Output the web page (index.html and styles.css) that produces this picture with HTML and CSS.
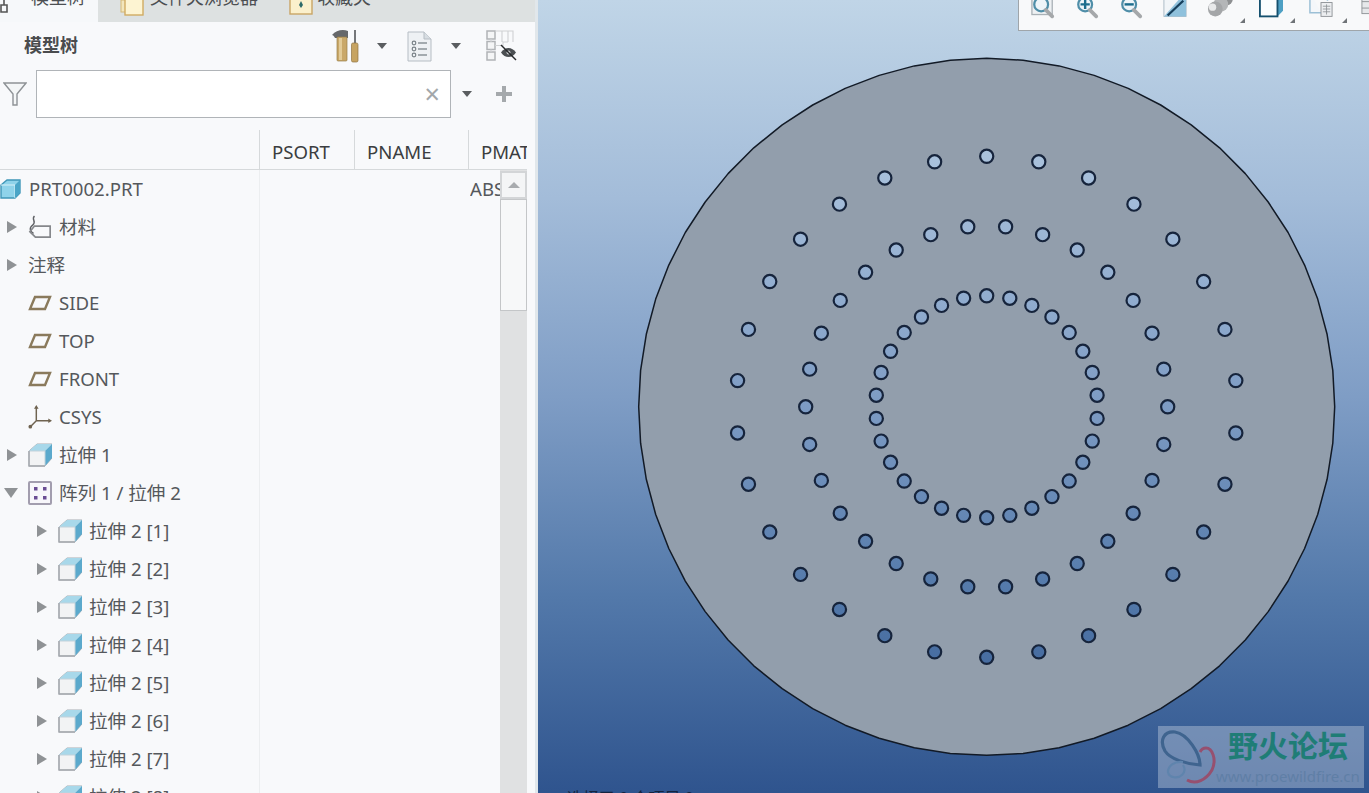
FILE: index.html
```html
<!DOCTYPE html>
<html lang="zh">
<head>
<meta charset="utf-8">
<title>模型树</title>
<link rel="stylesheet" href="styles.css">
</head>
<body>
<svg class="defs" width="0" height="0" aria-hidden="true">
  <defs>
    <symbol id="i-solid" viewBox="0 0 21 20">
      <path d="M1 6 L7 1 H20 V14 L15 19 H1Z" fill="#8fd3ea" stroke="#3f97b8" stroke-width="1.4"/>
      <path d="M1 6 H15 V19" fill="none" stroke="#d8f1f8" stroke-width="1"/>
      <path d="M15 6 L20 1 V14 L15 19Z" fill="#4aa5c7"/>
    </symbol>
    <symbol id="i-cube" viewBox="0 0 24 24">
      <path d="M1 8 L9 1 H24 V15 L17 23 H1Z" fill="#f2f3f4" stroke="#a9adb2" stroke-width="1"/>
      <path d="M1 8 L9 1 H24 L17 8Z" fill="#a8d8ea"/>
      <path d="M17 8 L24 1 V15 L17 23Z" fill="#5ba9cc"/>
      <path d="M1 8 H17 V23" fill="none" stroke="#c2d2da" stroke-width="1"/>
      <path d="M1 8 V23 H17" fill="none" stroke="#a5a9ae" stroke-width="1.4"/>
    </symbol>
    <symbol id="i-plane" viewBox="0 0 24 16">
      <path d="M7 2 H22 L17 14 H2Z" fill="none" stroke="#8a7a5c" stroke-width="2.4"/>
    </symbol>
    <symbol id="i-mat" viewBox="0 0 26 26">
      <path d="M7 1 C3 5 10 7 5 11 C1 14 2 18 6 20" fill="none" stroke="#5f6165" stroke-width="1.5"/>
      <path d="M7 12 H24 V24 H8 L2 18Z" fill="none" stroke="#85878b" stroke-width="1.8"/>
    </symbol>
    <symbol id="i-csys" viewBox="0 0 26 26">
      <path d="M9 2 V17 H24 M9 17 L2 24" fill="none" stroke="#6f6350" stroke-width="1.6"/>
      <path d="M9 0 L6.5 4 H11.5Z M26 17 L22 14.5 V19.5Z" fill="#6f6350"/>
      <circle cx="2.5" cy="23.5" r="2" fill="#6f6350"/>
    </symbol>
    <symbol id="i-pattern" viewBox="0 0 24 24">
      <rect x="1" y="1" width="22" height="22" rx="1" fill="#f7f6fa" stroke="#a29dae" stroke-width="2"/>
      <g fill="#6a4c93"><rect x="6" y="6" width="3.5" height="3.5"/><rect x="15" y="6" width="3.5" height="3.5"/><rect x="6" y="15" width="3.5" height="3.5"/><rect x="15" y="15" width="3.5" height="3.5"/></g>
    </symbol>
    <symbol id="i-zoom" viewBox="0 0 26 26">
      <circle cx="11" cy="8" r="7.5" fill="#eef5f9" stroke="#4f8ea8" stroke-width="2.4"/>
      <path d="M16 14 L23 21" stroke="#a5a8aa" stroke-width="4" stroke-linecap="round"/>
    </symbol>
  </defs>
</svg>

<div class="app">
  <aside class="panel">
    <nav class="tabs">
      <div class="tab tab-active">
        <svg class="tab-glyph" viewBox="0 0 8 14"><path d="M1 5 H7 V12 H1Z M4 0 V5" fill="none" stroke="#555" stroke-width="1.6"/></svg>
        <span>模型树</span>
      </div>
      <div class="tab tab-folder">
        <svg class="tab-icon" viewBox="0 0 24 20"><rect x="1" y="0" width="14" height="12" fill="#f2e6bd" stroke="#d4b878"/><rect x="5" y="-4" width="18" height="19" fill="#fdf4d2" stroke="#d0ab62" stroke-width="1.4"/></svg>
        <span>文件夹浏览器</span>
      </div>
      <div class="tab tab-fav">
        <svg class="tab-icon" viewBox="0 0 24 20"><rect x="1" y="-4" width="22" height="18" fill="#fbf0cc" stroke="#c9a566" stroke-width="1.4"/><path d="M12 1 L14 5 L12 8 L10 5Z" fill="#2d6a68"/></svg>
        <span>收藏夹</span>
      </div>
    </nav>

    <header class="title-row">
      <h1 class="title">模型树</h1>
      <svg class="tool tool-hammer" viewBox="0 0 26 33">
        <path d="M0 5 C4 0 11 -1 16 1 V8 H3 C2 6 1 5 0 5Z" fill="#66686a"/>
        <rect x="5" y="7" width="10" height="24" rx="1" fill="#c9a869" stroke="#9a8048" stroke-width=".7"/>
        <rect x="7" y="8" width="3" height="22" fill="#e2cb98"/>
        <rect x="22" y="0" width="2" height="14" fill="#75777a"/>
        <rect x="19.5" y="13" width="6.5" height="19" rx="1.5" fill="#c7a462" stroke="#8f7443" stroke-width=".7"/>
      </svg>
      <span class="caret caret-a"></span>
      <svg class="tool tool-doc" viewBox="0 0 25 31">
        <path d="M1 1 H17 L24 8 V30 H1Z" fill="#eef1f4" stroke="#b6bdc4"/>
        <path d="M17 1 V8 H24" fill="#d7dde2" stroke="#b6bdc4"/>
        <g fill="none" stroke="#7a8288" stroke-width="1.2"><circle cx="7" cy="12" r="1.8"/><circle cx="7" cy="18" r="1.8"/><circle cx="7" cy="24" r="1.8"/></g>
        <path d="M11 12 H20 M11 18 H20 M11 24 H20" stroke="#8a9298" stroke-width="1.4"/>
      </svg>
      <span class="caret caret-b"></span>
      <svg class="tool tool-eye" viewBox="0 0 31 32">
        <g fill="#f4f5f6" stroke="#b0b3b6" stroke-width="1.5"><rect x="1" y="1" width="8" height="8"/><rect x="1" y="11.5" width="8" height="8"/><rect x="1" y="22" width="8" height="8"/></g>
        <path d="M9 1 H27 V12 M16 1 V12 M22 1 V12 M9 15.5 H17 V12 H22 M5 9 V12 M5 19.5 V22" fill="none" stroke="#cfd1d3" stroke-width="1.1"/>
        <path d="M15 22.5 C19 16.5 26 16.5 30 22.5 C26 28.5 19 28.5 15 22.5Z" fill="#4b4f52"/>
        <circle cx="22.5" cy="22.5" r="2" fill="#c8cacc"/>
        <path d="M15 15 L30 30" stroke="#26282a" stroke-width="1.5"/>
      </svg>
    </header>

    <div class="search-row">
      <svg class="funnel" viewBox="0 0 24 24"><path d="M1 1 H23 L14 12 V23 H10 V12Z" fill="#f4f6f7" stroke="#8e9296" stroke-width="1.4"/></svg>
      <div class="search-box"><span class="clear">×</span></div>
      <span class="caret caret-s"></span>
      <svg class="plus" viewBox="0 0 16 16"><path d="M8 0 V16 M0 8 H16" stroke="#a5a9ac" stroke-width="4"/></svg>
    </div>

    <section class="table">
      <div class="thead">
        <div class="th th-tree"></div>
        <div class="th th-sort">PSORT</div>
        <div class="th th-name">PNAME</div>
        <div class="th th-mat">PMAT</div>
      </div>
      <div class="tbody">
        <ul class="tree">
          <li class="row lv0"><svg class="ico ico-solid"><use href="#i-solid"/></svg><span>PRT0002.PRT</span></li>
          <li class="row lv1"><i class="arrow"></i><svg class="ico"><use href="#i-mat"/></svg><span class="cjk">材料</span></li>
          <li class="row lv1"><i class="arrow"></i><span class="cjk">注释</span></li>
          <li class="row lv1"><i class="arrow none"></i><svg class="ico"><use href="#i-plane"/></svg><span>SIDE</span></li>
          <li class="row lv1"><i class="arrow none"></i><svg class="ico"><use href="#i-plane"/></svg><span>TOP</span></li>
          <li class="row lv1"><i class="arrow none"></i><svg class="ico"><use href="#i-plane"/></svg><span>FRONT</span></li>
          <li class="row lv1"><i class="arrow none"></i><svg class="ico"><use href="#i-csys"/></svg><span>CSYS</span></li>
          <li class="row lv1"><i class="arrow"></i><svg class="ico"><use href="#i-cube"/></svg><span class="cjk">拉伸 1</span></li>
          <li class="row lv1"><i class="arrow open"></i><svg class="ico"><use href="#i-pattern"/></svg><span class="cjk">阵列 1 / 拉伸 2</span></li>
          <li class="row lv2"><i class="arrow"></i><svg class="ico"><use href="#i-cube"/></svg><span class="cjk">拉伸 2 [1]</span></li>
          <li class="row lv2"><i class="arrow"></i><svg class="ico"><use href="#i-cube"/></svg><span class="cjk">拉伸 2 [2]</span></li>
          <li class="row lv2"><i class="arrow"></i><svg class="ico"><use href="#i-cube"/></svg><span class="cjk">拉伸 2 [3]</span></li>
          <li class="row lv2"><i class="arrow"></i><svg class="ico"><use href="#i-cube"/></svg><span class="cjk">拉伸 2 [4]</span></li>
          <li class="row lv2"><i class="arrow"></i><svg class="ico"><use href="#i-cube"/></svg><span class="cjk">拉伸 2 [5]</span></li>
          <li class="row lv2"><i class="arrow"></i><svg class="ico"><use href="#i-cube"/></svg><span class="cjk">拉伸 2 [6]</span></li>
          <li class="row lv2"><i class="arrow"></i><svg class="ico"><use href="#i-cube"/></svg><span class="cjk">拉伸 2 [7]</span></li>
          <li class="row lv2"><i class="arrow"></i><svg class="ico"><use href="#i-cube"/></svg><span class="cjk">拉伸 2 [8]</span></li>
        </ul>
        <div class="cols"><span class="cell">ABS</span></div>
        <div class="scrollbar">
          <div class="sb-up"><i></i></div>
          <div class="sb-thumb"></div>
        </div>
      </div>
    </section>
  </aside>
  <div class="strip"></div>

  <main class="viewport">
    <svg id="part" class="part" viewBox="538 0 831 793" width="831" height="793">
      <defs>
        <linearGradient id="bg" gradientUnits="userSpaceOnUse" x1="0" y1="0" x2="0" y2="793">
          <stop offset="0" stop-color="#c0d5e7"/>
          <stop offset=".25" stop-color="#a3bcd9"/>
          <stop offset=".5" stop-color="#7f9dc5"/>
          <stop offset=".75" stop-color="#5379aa"/>
          <stop offset="1" stop-color="#2f548e"/>
        </linearGradient>
      </defs>
    </svg>

    <div class="vp-toolbar">
      <div class="vt-cell"><svg class="vt" viewBox="0 0 26 26"><rect x="1" y="-6" width="22" height="25" fill="#eef1f3" stroke="#a9b1b6" stroke-width="1.4"/><use href="#i-zoom" width="26" height="26"/></svg></div>
      <div class="vt-cell"><svg class="vt" viewBox="0 0 26 26"><use href="#i-zoom" width="26" height="26"/><path d="M11 3 V13 M6 8 H16" stroke="#1c6d8d" stroke-width="2.6"/></svg></div>
      <div class="vt-cell"><svg class="vt" viewBox="0 0 26 26"><use href="#i-zoom" width="26" height="26"/><path d="M6 8 H16" stroke="#1c6d8d" stroke-width="2.6"/></svg></div>
      <div class="vt-cell"><svg class="vt" viewBox="0 0 26 26"><rect x="1" y="-6" width="24" height="27" fill="#f1f5f8" stroke="#a9b8c2"/><path d="M25 -6 V21 H1Z" fill="#8fc1dc"/><path d="M5 20 L22 4" stroke="#163f5c" stroke-width="2.4"/></svg></div>
      <div class="vt-cell corner wide"><svg class="vt" viewBox="0 0 26 26"><circle cx="21" cy="2" r="7" fill="#8e9092"/><circle cx="15" cy="8" r="8" fill="#b4b6b8"/><circle cx="9" cy="13" r="8" fill="#a4a6a8"/><circle cx="6" cy="11" r="4" fill="#e8e9ea"/></svg></div>
      <div class="vt-cell corner narrow"><svg class="vt" viewBox="0 0 26 26"><path d="M20 21 L26 15 V-8 H20Z" fill="#4ea0c4"/><rect x="1" y="-6" width="19" height="27" fill="#fbfdfe" stroke="#15506e" stroke-width="2"/></svg></div>
      <div class="vt-cell corner wide"><svg class="vt" viewBox="0 0 26 26"><path d="M1 -6 V17 H13 M20 -6 V4" fill="#f4f7fa" stroke="#9cc0d6" stroke-width="1.6"/><rect x="13" y="6" width="12" height="15" fill="#eceef0" stroke="#8e9296"/><path d="M15 10 H23 M15 13 H23 M15 16 H23 M19 8 V19" stroke="#8e9296" stroke-width=".9"/></svg></div>
      <div class="vt-cell"><svg class="vt" viewBox="0 0 26 26"><rect x="1" y="-6" width="11" height="24" fill="#e6e8ea" stroke="#8e9296"/><path d="M1 5 H12 M1 12 H12" stroke="#8e9296"/></svg></div>
    </div>

    <div class="status">选择了 0 个项目 0</div>

    <div class="mark">
      <svg class="mark-logo" viewBox="0 0 62 62">
        <path d="M42 39 C42 28 30 8 17 6 C6 5 1 14 7 25 C12 33 28 38 42 39Z" fill="none" stroke="#3f648f" stroke-width="3.2"/>
        <path d="M29 54 C38 59 48 54 54 44 C59 33 54 22 48 22 C45 22 43 24 42 26" fill="none" stroke="#96506f" stroke-width="3"/>
        <path d="M25 36 C16 35 10 40 10 46 C11 52 20 53 24 49 C27 46 27 42 25 39" fill="none" stroke="#5f84ad" stroke-width="2.2"/>
      </svg>
      <div class="mark-name">野火论坛</div>
      <div class="mark-url">www.proewildfire.cn</div>
    </div>
  </main>
</div>
<script src="script.js"></script>
</body>
</html>
```
FILE: styles.css
```css
* { box-sizing: border-box; }
html, body { margin: 0; padding: 0; height: 100%; overflow: hidden; }
body { font-family: "Noto Sans", "Noto Sans CJK SC", sans-serif; background: #f8f9fb; }
.defs { position: absolute; }
.app { display: flex; width: 1369px; height: 793px; overflow: hidden; }

.panel { width: 535px; flex: none; display: flex; flex-direction: column; background: #f8f9fb; overflow: hidden; }
.strip { width: 3px; flex: none; background: #e1e7eb; }

.tabs { height: 22px; flex: none; display: flex; background: #dde1e1; overflow: hidden; font-size: 18px; line-height: 24px; color: #4c4f52; }
.tab { display: flex; align-items: flex-end; height: 22px; white-space: nowrap; }
.tab span { display: block; margin-bottom: 13px; }
.tab-active { width: 98px; background: #f6f8fa; position: relative; padding-left: 31px; }
.tab-glyph { position: absolute; left: 0; top: 0; width: 8px; height: 14px; }
.tab-folder { margin-left: 22px; }
.tab-fav { margin-left: 31px; }
.tab-icon { width: 24px; height: 20px; margin-right: 6px; overflow: visible; align-self: flex-start; }
.tab-fav .tab-icon { margin-right: 4px; }

.title-row { height: 48px; flex: none; display: flex; align-items: center; padding-left: 24px; }
.title { margin: 0 0 4px; font-size: 18px; font-weight: 700; color: #4a4c4e; width: 308px; }
.tool { flex: none; overflow: visible; }
.tool-hammer { width: 26px; height: 33px; }
.tool-doc { width: 25px; height: 31px; }
.tool-eye { width: 31px; height: 32px; }
.caret { flex: none; width: 0; height: 0; border-left: 5.5px solid transparent; border-right: 5.5px solid transparent; border-top: 6px solid #5a5d60; }
.caret-a { margin: 0 20px 0 19px; }
.caret-b { margin: 0 25px 0 19px; }
.caret-s { margin-left: 11px; }

.search-row { height: 48px; flex: none; display: flex; align-items: center; padding-left: 3px; }
.funnel { width: 24px; height: 24px; flex: none; margin-right: 9px; }
.search-box { width: 415px; height: 48px; flex: none; background: #fff; border: 1px solid #b0b4b8; display: flex; align-items: center; justify-content: flex-end; padding-right: 10px; }
.clear { font-size: 27px; line-height: 24px; color: #a3a7aa; }
.plus { width: 16px; height: 16px; flex: none; margin-left: 24px; }

.table { width: 527px; margin-top: 12px; flex: 1; min-height: 0; display: flex; flex-direction: column; overflow: hidden; }
.thead { height: 40px; flex: none; display: flex; border-bottom: 1px solid #d6d9db; overflow: hidden; }
.th { flex: none; height: 39px; border-right: 1px solid #d6d9db; padding-left: 12px; font-size: 18.6px; line-height: 44px; color: #3b3d40; white-space: nowrap; }
.th-tree { width: 260px; }
.th-sort { width: 95px; }
.th-name { width: 114px; }
.th-mat { width: 80px; border-right: 0; }

.tbody { flex: 1; min-height: 0; display: flex; }
.tree { list-style: none; margin: 0; padding: 0; width: 260px; flex: none; border-right: 1px solid #eceef0; font-size: 18.6px; color: #55585c; }
.row { height: 38px; display: flex; align-items: center; white-space: nowrap; }
.row span { margin-bottom: 2px; }
.row .cjk { margin-bottom: 4px; }
.lv0 { padding-left: 0; }
.lv1 { padding-left: 7px; }
.lv2 { padding-left: 37px; }
.arrow { flex: none; width: 0; height: 0; margin-right: 11px; border-top: 6.5px solid transparent; border-bottom: 6.5px solid transparent; border-left: 10px solid #8f9295; }
.arrow.none { border-left-color: transparent; }
.arrow.open { margin-left: -3px; margin-right: 10px; border-left: 7.5px solid transparent; border-right: 7.5px solid transparent; border-top: 10px solid #8f9295; border-bottom: 0; }
.ico { width: 24px; height: 24px; flex: none; margin-right: 7px; }
.ico-solid { width: 21px; height: 20px; margin-right: 8px; }

.cols { width: 240px; flex: none; overflow: hidden; padding-left: 210px; font-size: 18.6px; line-height: 38px; color: #55585c; white-space: nowrap; }
.cell { display: block; width: 30px; overflow: hidden; }
.scrollbar { width: 27px; flex: none; background: #e0e1e2; display: flex; flex-direction: column; padding-top: 1px; }
.sb-up { height: 28px; flex: none; background: #f4f5f6; border: 2px solid #d3d5d7; display: flex; align-items: center; justify-content: center; }
.sb-up i { width: 0; height: 0; border-left: 6px solid transparent; border-right: 6px solid transparent; border-bottom: 6px solid #a8abae; }
.sb-thumb { height: 112px; flex: none; background: #f7f8f9; border: 1px solid #c4c6c8; }

.viewport { position: relative; flex: 1; background: linear-gradient(#c0d5e7 0%, #a3bcd9 25%, #7f9dc5 50%, #5379aa 75%, #2f548e 100%); overflow: hidden; }
.part { position: absolute; left: 0; top: 0; }
.disk { fill: #929eac; stroke: #121a26; stroke-width: 1.5; stroke-linejoin: round; }
.hole { fill: url(#bg); stroke: #16243c; stroke-width: 2.2; }

.vp-toolbar { position: absolute; right: 0; top: 0; width: 351px; height: 31px; background: #f8f9fa; border-left: 1px solid #9fa5aa; border-bottom: 1px solid #9fa5aa; display: flex; align-items: flex-start; gap: 20px; padding-left: 12px; overflow: hidden; }
.vt-cell { flex: none; width: 24px; height: 30px; position: relative; }
.vt-cell.wide { width: 32px; }
.vt-cell.narrow { width: 30px; }
.corner::after { content: ""; position: absolute; left: 33px; top: 18px; width: 0; height: 0; border-left: 5px solid transparent; border-bottom: 5px solid #6f7377; }
.narrow::after { left: 31px; }
.vt { display: block; width: 24px; height: 24px; margin-top: -3px; overflow: visible; }

.status { position: absolute; left: 29px; top: 789px; font-size: 16px; line-height: 18px; color: #14233f; white-space: nowrap; }

.mark { position: absolute; left: 620px; top: 726px; width: 206px; height: 62px; background: rgba(196, 208, 224, .42); }
.mark-logo { position: absolute; left: 0; top: 0; width: 62px; height: 62px; }
.mark-name { position: absolute; left: 70px; top: 1px; font-size: 30px; line-height: 38px; font-weight: 700; color: #1f7d76; white-space: nowrap; }
.mark-url { position: absolute; left: 58px; top: 39px; font-size: 15px; line-height: 22px; color: #5f7fa6; white-space: nowrap; }
```
FILE: script.js
```js
// Draws the part: a faceted disk and three rings of 30 holes each.
(function () {
  var svg = document.getElementById('part');
  var NS = 'http://www.w3.org/2000/svg';
  var cx = 986.7, cy = 406.8;

  var pts = [];
  for (var i = 0; i < 60; i++) {
    var a = i * 6 * Math.PI / 180;
    pts.push((cx + 348 * Math.sin(a)).toFixed(1) + ',' + (cy - 348.5 * Math.cos(a)).toFixed(1));
  }
  var disk = document.createElementNS(NS, 'polygon');
  disk.setAttribute('points', pts.join(' '));
  disk.setAttribute('class', 'disk');
  svg.appendChild(disk);

  var rings = [
    { r: 111, offset: 0 },
    { r: 181, offset: 6 },
    { r: 250.5, offset: 0 }
  ];
  rings.forEach(function (ring) {
    for (var k = 0; k < 30; k++) {
      var t = (ring.offset + k * 12) * Math.PI / 180;
      var c = document.createElementNS(NS, 'circle');
      c.setAttribute('cx', (cx + ring.r * Math.sin(t)).toFixed(2));
      c.setAttribute('cy', (cy - ring.r * Math.cos(t)).toFixed(2));
      c.setAttribute('r', '6.6');
      c.setAttribute('class', 'hole');
      svg.appendChild(c);
    }
  });
})();
```
